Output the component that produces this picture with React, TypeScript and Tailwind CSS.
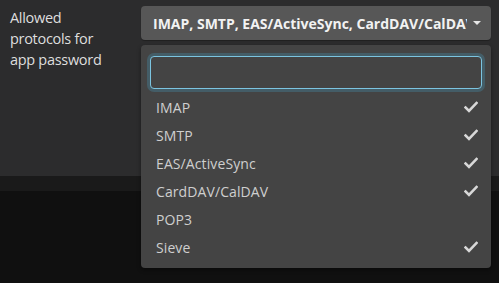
import React from "react";

const items: { label: string; checked: boolean }[] = [
  { label: "IMAP", checked: true },
  { label: "SMTP", checked: true },
  { label: "EAS/ActiveSync", checked: true },
  { label: "CardDAV/CalDAV", checked: true },
  { label: "POP3", checked: false },
  { label: "Sieve", checked: true },
];

function Check() {
  return (
    <svg width="14" height="12" viewBox="0 0 14 12" className="block">
      <path d="M1.5 6.5 L5 10 L12.5 2" fill="none" stroke="#d8d8d8" strokeWidth="2.6" strokeLinecap="square" strokeLinejoin="miter" />
    </svg>
  );
}

export default function App() {
  return (
    <div className="w-[499px] h-[283px] bg-[#101010] overflow-hidden" style={{ fontFamily: '"Open Sans", sans-serif' }}>
      <div className="relative">
        <div className="h-[176px] bg-[#2c2c2d] flex pt-[6px]">
          <div className="w-[141px] pl-[10px] pt-[1px] text-[14.5px] leading-[21px] text-[#dedede] tracking-[-0.3px]">
            Allowed
            <br />
            protocols for
            <br />
            app password
          </div>
          <div className="w-[350px] h-[34px] bg-[#575757] rounded-[4px] flex items-center pl-[12px] pr-[10px] shadow-[0_1px_1px_rgba(0,0,0,0.3)]">
            <span className="flex-1 whitespace-nowrap overflow-hidden text-[14px] font-bold text-[#f2f2f2] tracking-[0px]">
              IMAP, SMTP, EAS/ActiveSync, CardDAV/CalDAV, Sieve
            </span>
            <span className="ml-[6px] w-0 h-0 border-l-[4px] border-r-[4px] border-t-[4px] border-l-transparent border-r-transparent border-t-[#e6e6e6]" />
          </div>
        </div>
        <div className="h-[15px] bg-[#1a1a1a]" />
        <div className="absolute left-[141px] top-[45px] w-[350px] h-[223px] bg-[#444444] rounded-[4px] shadow-[0_2px_4px_rgba(0,0,0,0.4)] pt-[11px]">
          <div className="mx-[9px] h-[33px] rounded-[4px] border border-[#7cc4e0] bg-[#444444] shadow-[0_0_0_3px_rgba(70,140,170,0.35)]" />
          <div className="mt-[4px]">
            {items.map((it) => (
              <div key={it.label} className="h-[28px] flex items-center pl-[15px] pr-[13px] text-[14px] text-[#cfcfcf] tracking-[0.1px]">
                <span className="flex-1">{it.label}</span>
                {it.checked && <Check />}
              </div>
            ))}
          </div>
        </div>
      </div>
    </div>
  );
}
